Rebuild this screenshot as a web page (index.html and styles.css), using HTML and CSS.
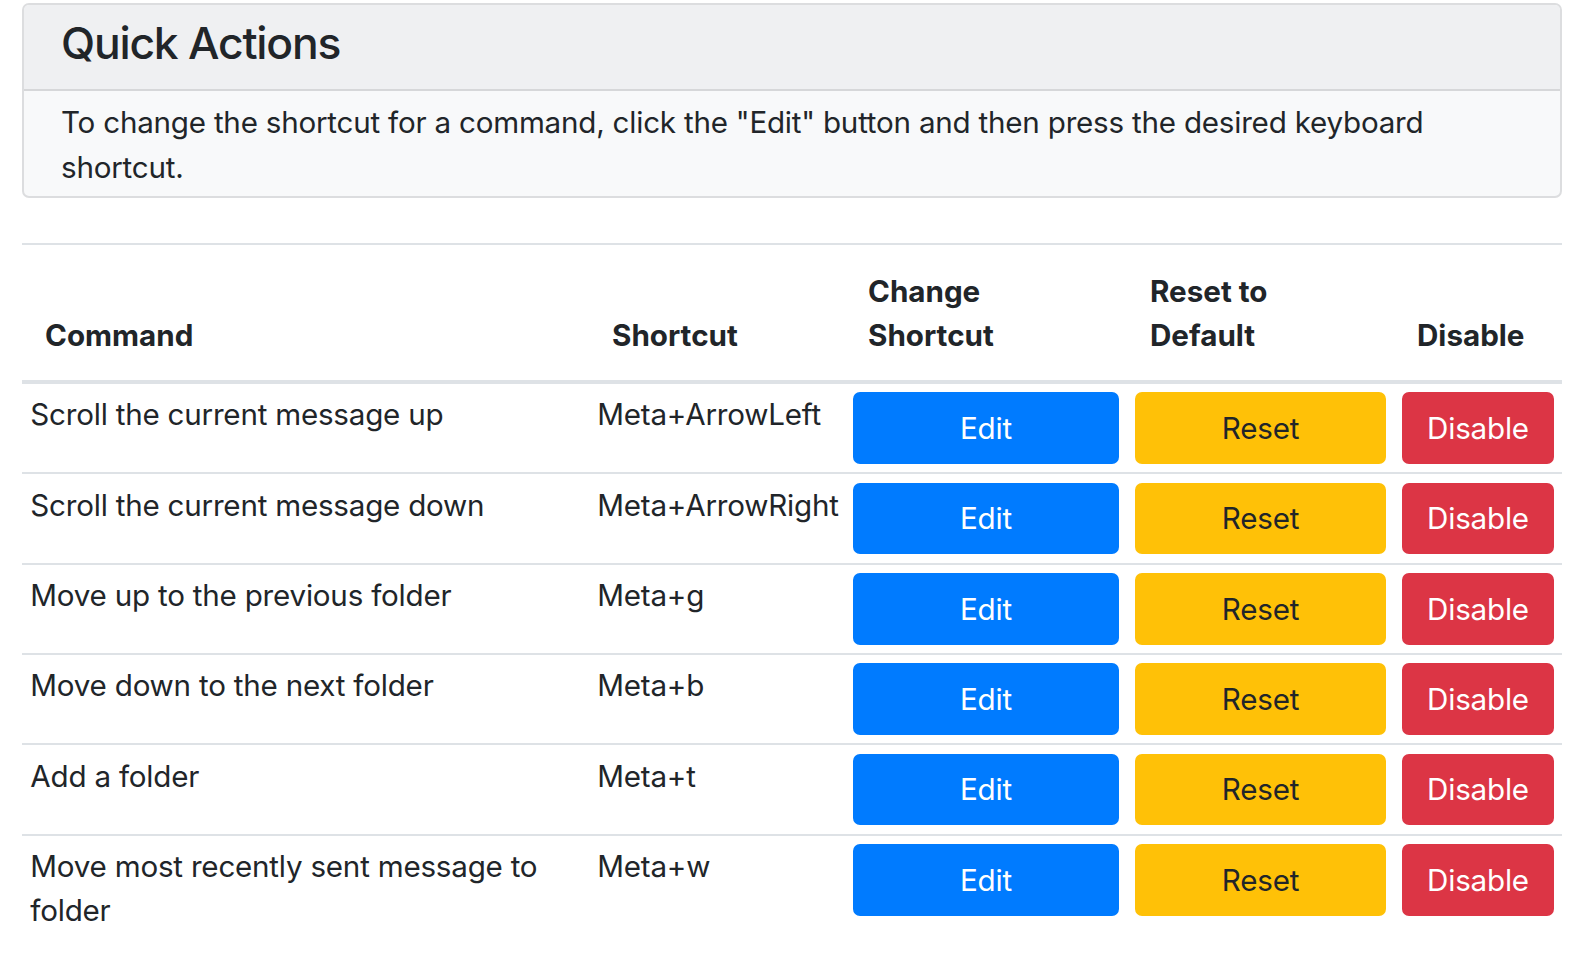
FILE: index.html
```html
<!DOCTYPE html>
<html lang="en">
<head>
<meta charset="utf-8">
<title>Quick Actions</title>
<link rel="stylesheet" href="styles.css">
</head>
<body>
<div class="page">
  <div class="card">
    <div class="card-header">
      <h4 class="card-title">Quick Actions</h4>
    </div>
    <div class="card-body">
      To change the shortcut for a command, click the "Edit" button and then press the desired keyboard shortcut.
    </div>
  </div>

  <table class="shortcuts">
    <colgroup>
      <col class="c-command">
      <col class="c-shortcut">
      <col class="c-edit">
      <col class="c-reset">
      <col class="c-disable">
    </colgroup>
    <thead>
      <tr>
        <th>Command</th>
        <th>Shortcut</th>
        <th>Change<br>Shortcut</th>
        <th>Reset to<br>Default</th>
        <th>Disable</th>
      </tr>
    </thead>
    <tbody>
      <tr>
        <td>Scroll the current message up</td>
        <td class="key">Meta+ArrowLeft</td>
        <td class="act"><button class="btn btn-primary">Edit</button></td>
        <td class="act"><button class="btn btn-warning">Reset</button></td>
        <td class="act"><button class="btn btn-danger">Disable</button></td>
      </tr>
      <tr>
        <td>Scroll the current message down</td>
        <td class="key">Meta+ArrowRight</td>
        <td class="act"><button class="btn btn-primary">Edit</button></td>
        <td class="act"><button class="btn btn-warning">Reset</button></td>
        <td class="act"><button class="btn btn-danger">Disable</button></td>
      </tr>
      <tr>
        <td>Move up to the previous folder</td>
        <td class="key">Meta+g</td>
        <td class="act"><button class="btn btn-primary">Edit</button></td>
        <td class="act"><button class="btn btn-warning">Reset</button></td>
        <td class="act"><button class="btn btn-danger">Disable</button></td>
      </tr>
      <tr>
        <td>Move down to the next folder</td>
        <td class="key">Meta+b</td>
        <td class="act"><button class="btn btn-primary">Edit</button></td>
        <td class="act"><button class="btn btn-warning">Reset</button></td>
        <td class="act"><button class="btn btn-danger">Disable</button></td>
      </tr>
      <tr>
        <td>Add a folder</td>
        <td class="key">Meta+t</td>
        <td class="act"><button class="btn btn-primary">Edit</button></td>
        <td class="act"><button class="btn btn-warning">Reset</button></td>
        <td class="act"><button class="btn btn-danger">Disable</button></td>
      </tr>
      <tr>
        <td>Move most recently sent message to folder</td>
        <td class="key">Meta+w</td>
        <td class="act"><button class="btn btn-primary">Edit</button></td>
        <td class="act"><button class="btn btn-warning">Reset</button></td>
        <td class="act"><button class="btn btn-danger">Disable</button></td>
      </tr>
    </tbody>
  </table>
</div>
</body>
</html>
```

FILE: styles.css
```css
html, body {
  margin: 0;
  padding: 0;
  background: #ffffff;
}

body {
  font-family: "Inter", "Liberation Sans", sans-serif;
  font-size: 29.6px;
  line-height: 1.5;
  letter-spacing: -0.22px;
  color: #212529;
}

.page {
  padding: 3px 20px 0 22px;
}

.card {
  border: 2px solid #dcdddf;
  border-radius: 7px;
  background: #f8f9fa;
  overflow: hidden;
}

.card-header {
  background: #eff0f2;
  border-bottom: 2px solid #d6d7d9;
  padding: 12px 37px 19px;
}

.card-title {
  margin: 0;
  font-size: 44.4px;
  font-weight: 500;
  line-height: 1.2;
  letter-spacing: -1.2px;
}

.card-body {
  padding: 9px 37px 7px;
}

.shortcuts {
  margin-top: 45px;
  width: 1540px;
  border-collapse: separate;
  border-spacing: 0;
  table-layout: fixed;
}

.c-command { width: 567px; }
.c-shortcut { width: 256px; }
.c-edit { width: 282px; }
.c-reset { width: 267px; }
.c-disable { width: 168px; }

.shortcuts th {
  font-weight: 700;
  letter-spacing: 0;
  text-align: left;
  vertical-align: bottom;
  padding: 24px 8px 22px 23px;
  border-top: 2px solid #dee2e6;
  border-bottom: 4px solid #dee2e6;
}

.shortcuts td {
  vertical-align: top;
  padding: 8.3px;
  border-top: 2px solid #dee2e6;
}

.shortcuts tbody tr:first-child td {
  border-top: 0;
}

.shortcuts td.key {
  white-space: nowrap;
}

.btn {
  display: block;
  width: 100%;
  box-sizing: border-box;
  font-family: inherit;
  font-size: 29.6px;
  line-height: 44.4px;
  letter-spacing: -0.22px;
  font-weight: 400;
  padding: 11.7px 10px;
  border: 2px solid transparent;
  border-radius: 7px;
  text-align: center;
  cursor: pointer;
}

.btn-primary {
  background: #007bff;
  border-color: #007bff;
  color: #ffffff;
}

.btn-warning {
  background: #ffc107;
  border-color: #ffc107;
  color: #212529;
}

.btn-danger {
  background: #dc3545;
  border-color: #dc3545;
  color: #ffffff;
}
```
